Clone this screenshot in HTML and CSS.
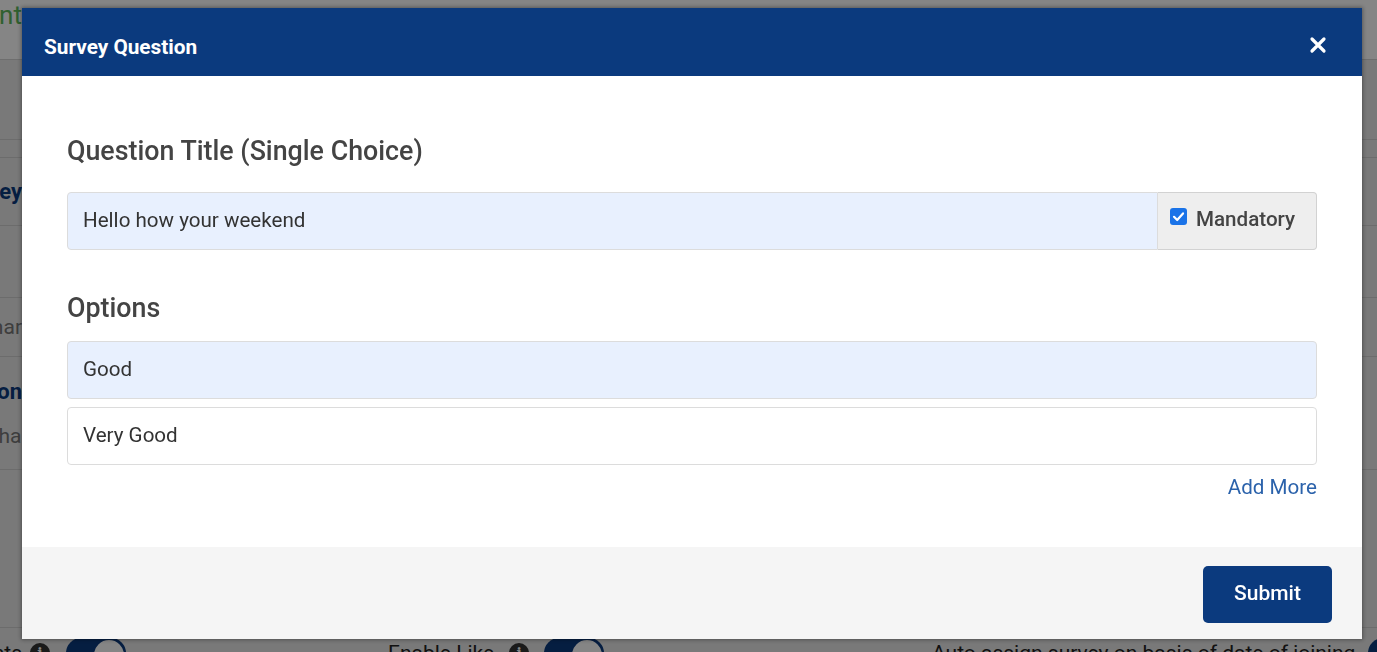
FILE: index.html
```html
<!DOCTYPE html>
<html lang="en">
<head>
  <meta charset="UTF-8" />
  <meta name="viewport" content="width=device-width, initial-scale=1" />
  <title>Survey Question</title>
  <link rel="stylesheet" href="styles.css">
</head>
<body>
<div class="page">
  <div class="page-top">
    <span class="page-label crumb">Survey Content</span>
  </div>
  <div class="page-row strip-a"></div>
  <div class="page-row strip-b"></div>
  <div class="page-row row-survey"><span class="page-label strong">Survey</span></div>
  <div class="page-row row-empty"></div>
  <div class="page-row row-desc"><span class="page-label muted">Webinar</span></div>
  <div class="page-row row-question">
    <span class="page-label strong">Question</span>
    <span class="page-label muted overhang">Rather than</span>
  </div>
  <div class="page-row row-spacer"></div>
  <div class="settings">
    <div class="setting">
      <span class="page-label setting-text">Enable Comments</span>
      <span class="info">i</span>
      <span class="toggle"></span>
    </div>
    <div class="setting">
      <span class="setting-text">Enable Like</span>
      <span class="info">i</span>
      <span class="toggle"></span>
    </div>
    <div class="setting">
      <span class="setting-text">Auto assign survey on basis of date of joining</span>
      <span class="toggle"></span>
    </div>
  </div>
</div>

<div class="backdrop">
  <div class="modal">
    <div class="modal-header">
      <h3>Survey Question</h3>
      <button class="close-btn" aria-label="Close">
        <svg width="18" height="18" viewBox="0 0 18 18"><path d="M3 3 L15 15 M15 3 L3 15" stroke="#fff" stroke-width="3.2" stroke-linecap="round"/></svg>
      </button>
    </div>
    <div class="modal-body">
      <h4 class="field-title">Question Title (Single Choice)</h4>
      <div class="input-group">
        <div class="input filled">Hello how your weekend</div>
        <label class="addon">
          <span class="check">
            <svg width="17" height="17" viewBox="0 0 17 17"><rect x="0" y="0" width="17" height="17" rx="3" fill="#1a73e8"/><path d="M4 8.8 L7.2 12 L13 5.4" stroke="#fff" stroke-width="2.2" fill="none" stroke-linecap="round" stroke-linejoin="round"/></svg>
          </span>
          Mandatory
        </label>
      </div>

      <h4 class="field-title options-title">Options</h4>
      <div class="input filled option">Good</div>
      <div class="input option">Very Good</div>
      <div class="add-more"><a href="#">Add More</a></div>
    </div>
    <div class="modal-footer">
      <button class="submit-btn">Submit</button>
    </div>
  </div>
</div>
</body>
</html>
```

FILE: styles.css
```css
* { margin: 0; padding: 0; box-sizing: border-box; }
html, body {
  height: 100%; overflow: hidden;
  font-family: Roboto, 'Liberation Sans', Arial, sans-serif;
}
body { background: #e8e8e8; }

/* page under the dialog */
.page {
  margin-left: -300px;
  width: 1700px;
}
.page-top {
  height: 60px;
  background: #fff;
  border-bottom: 1px solid #d4d4d4;
  display: flex;
  align-items: flex-start;
  padding-top: 0;
}
.page-label {
  display: block;
  width: 322px;
  text-align: right;
  white-space: nowrap;
  font-size: 22px;
}
.crumb { color: #5cb85c; font-size: 26px; }
.strong { color: #0b3a7e; font-weight: 700; }
.muted { color: #777; font-size: 21px; }
.overhang { width: 333px; }

.page-row {
  border-bottom: 1px solid #d0d0d0;
  display: flex;
  flex-direction: column;
  justify-content: center;
}
.strip-a { height: 80px; }
.strip-b { height: 18px; }
.row-survey { height: 68px; }
.row-empty { height: 72px; }
.row-desc { height: 59px; }
.row-question { height: 113px; gap: 20px; }
.row-spacer { height: 158px; }

.settings {
  display: grid;
  grid-template-columns: 688px 544px 1fr;
  padding-top: 10px;
}
.setting {
  display: flex;
  align-items: center;
  height: 30px;
}
.setting-text {
  font-size: 21px;
  color: #222;
  white-space: nowrap;
}
.info {
  width: 20px; height: 20px;
  border-radius: 50%;
  background: #333;
  color: #fff;
  font: 700 14px/20px 'DejaVu Serif', serif;
  text-align: center;
  margin: 0 15px 0 15px;
}
.setting:first-child .info { margin-left: 8px; margin-right: 16px; }
.toggle {
  width: 60px; height: 30px;
  border-radius: 15px;
  background: #0b3a7e;
  position: relative;
  margin-left: 13px;
}
.info + .toggle { margin-left: 0; }
.toggle::after {
  content: '';
  position: absolute;
  right: 0; top: 0;
  width: 30px; height: 30px;
  border-radius: 50%;
  background: #fff;
  border: 2px solid #0b3a7e;
}

/* dialog */
.backdrop {
  position: fixed;
  inset: 0;
  background: rgba(0, 0, 0, 0.48);
}
.modal {
  position: absolute;
  top: 8px; left: 22px;
  width: 1340px;
  height: 631px;
  background: #fff;
  display: flex;
  flex-direction: column;
  box-shadow: 0 0 4px 1px rgba(0, 0, 0, 0.35);
}
.modal-header {
  height: 68px;
  background: #0b3a7e;
  display: flex;
  align-items: center;
  justify-content: space-between;
  padding: 6px 35px 0 22px;
}
.modal-header h3 {
  color: #fff;
  font-size: 20.8px;
  font-weight: 700;
  margin-top: 4px;
}
.close-btn {
  background: none;
  border: none;
  display: flex;
  cursor: pointer;
}

.modal-body {
  flex: 1;
  padding: 60px 45px 0;
}
.field-title {
  font-size: 26.8px;
  font-weight: 500;
  line-height: 31px;
  color: #444;
  margin-bottom: 25px;
}
.options-title { margin-bottom: 17px; }

.input-group {
  display: flex;
  height: 58px;
  margin-bottom: 43px;
}
.input {
  height: 58px;
  border: 1px solid #dcdcdc;
  border-radius: 4px;
  padding: 0 15px;
  display: flex;
  align-items: center;
  font-size: 20.6px;
  color: #333;
  background: #fff;
  padding-bottom: 3px;
}
.input.filled { background: #e8f0fe; }
.input-group .input {
  flex: 1;
  border-radius: 4px 0 0 4px;
}
.addon {
  width: 159px;
  background: #eeeeee;
  border: 1px solid #d2d2d2;
  border-left: none;
  border-radius: 0 4px 4px 0;
  display: flex;
  align-items: center;
  padding-left: 12px;
  padding-bottom: 4px;
  font-size: 20.6px;
  font-weight: 500;
  color: #444;
}
.check {
  display: flex;
  margin: -6px 9px 0 0;
}
.option { margin-bottom: 8px; }

.add-more {
  text-align: right;
  margin-top: 10px;
  line-height: 24px;
}
.add-more a {
  color: #2b62ab;
  font-size: 20.6px;
  text-decoration: none;
}

.modal-footer {
  height: 92px;
  background: #f5f5f5;
  display: flex;
  justify-content: flex-end;
  align-items: flex-start;
  padding: 19px 30px 0 0;
}
.submit-btn {
  width: 129px;
  height: 57px;
  border: none;
  border-radius: 5px;
  background: #0b3a7e;
  color: #fff;
  font-family: Roboto, 'Liberation Sans', Arial, sans-serif;
  font-size: 21px;
  font-weight: 500;
  cursor: pointer;
  padding-bottom: 3px;
}
```
